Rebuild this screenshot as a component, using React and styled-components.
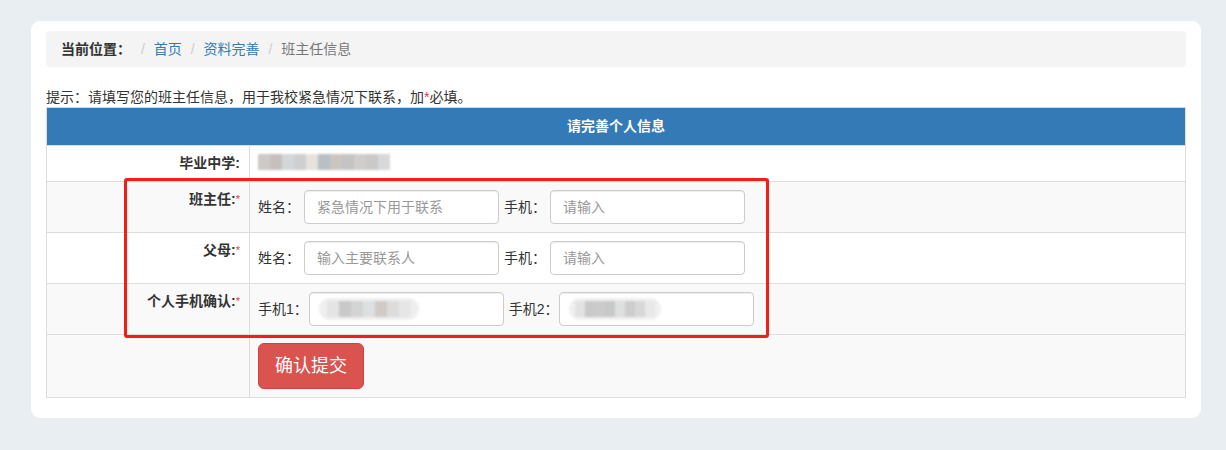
import React from 'react';
import styled, { createGlobalStyle } from 'styled-components';

const GlobalStyle = createGlobalStyle`
    html, body {
        margin: 0;
        padding: 0;
        background: #e8eef1;
    }
    body {
        font-family: 'Liberation Sans', 'Noto Sans CJK SC', sans-serif;
        color: #333;
        font-size: 14px;
    }
    * {
        box-sizing: border-box;
    }
`;

const Page = styled.div`
    padding: 21px 25px 33px 31px;
`;

const Card = styled.div`
    background: #fff;
    border-radius: 9px;
    padding: 10px 15px 20px 15px;
`;

const Breadcrumb = styled.ol`
    list-style: none;
    margin: 0 0 20px;
    padding: 8px 15px;
    height: 36px;
    background: #f4f4f4;
    border-radius: 4px;
    display: flex;
    align-items: center;
    line-height: 20px;
    font-size: 14px;

    & > li + li:before {
        content: '/\\00a0';
        padding: 0 5px;
        color: #ccc;
    }
`;

const Crumb = styled.li`
    color: ${(props) => (props.$active ? '#777' : '#337ab7')};
    font-weight: ${(props) => (props.$strong ? 'bold' : 'normal')};
    margin-right: 4px;
    ${(props) => props.$strong && 'color: #333; margin-right: 5px;'}
`;

const Hint = styled.p`
    margin: 0;
    font-size: 14px;
    line-height: 20px;
    color: #333;
`;

const Star = styled.span`
    color: #e4393c;
    font-size: ${(props) => (props.$small ? '11px' : 'inherit')};
    vertical-align: ${(props) => (props.$small ? 'top' : 'baseline')};
    font-weight: normal;
`;

const TableWrap = styled.div`
    position: relative;
`;

const Table = styled.table`
    width: 100%;
    border-collapse: collapse;
    border: 1px solid #ddd;
    font-size: 14px;
`;

const HeadCell = styled.th`
    background: #337ab7;
    color: #fff;
    font-size: 14px;
    font-weight: bold;
    text-align: center;
    padding: 9px 8px;
    line-height: 19px;
    border: 1px solid #ddd;
    border-top-color: #d6d6d6;
`;

const Row = styled.tr`
    background: ${(props) => (props.$striped ? '#f9f9f9' : '#fff')};
`;

const LabelCell = styled.td`
    width: 203px;
    text-align: right;
    vertical-align: top;
    font-weight: bold;
    padding: 8px 9px 8px 8px;
    line-height: 19px;
    border: 1px solid #ddd;
`;

const ValueCell = styled.td`
    padding: 8px;
    line-height: 19px;
    border: 1px solid #ddd;
    vertical-align: top;
`;

const FieldRow = styled.div`
    display: flex;
    align-items: center;
`;

const FieldLabel = styled.span`
    margin-right: ${(props) => (props.$gap !== undefined ? props.$gap : 4)}px;
    white-space: nowrap;
    color: #333;
`;

const inputLook = `
    width: 195px;
    height: 34px;
    padding: 6px 12px;
    border: 1px solid #ccc;
    border-radius: 4px;
    background: #fff;
    font-size: 14px;
    font-family: inherit;
    color: #555;
    box-shadow: inset 0 1px 1px rgba(0, 0, 0, 0.075);
    margin-right: 5px;
`;

const TextInput = styled.input`
    ${inputLook}
    outline: none;
    &::placeholder {
        color: #999;
    }
`;

const FilledInput = styled.div`
    ${inputLook}
    display: flex;
    align-items: center;
    padding-left: 9px;
`;

const Blurred = styled.div`
    display: flex;
    height: ${(props) => props.$h || 16}px;
    padding: 0 ${(props) => props.$pad || 0}px;
    border-radius: 12px;
    background: ${(props) => props.$bg || 'transparent'};
    filter: blur(0.8px);
    align-items: center;
`;

const Piece = styled.span`
    display: block;
    width: ${(props) => props.$w}px;
    height: 16px;
`;

const SubmitButton = styled.button`
    background: #d9534f;
    border: 1px solid #d43f3a;
    color: #fff;
    font-size: 18px;
    font-family: inherit;
    line-height: 24px;
    padding: 10px 16px;
    border-radius: 6px;
    height: 46px;
    width: 106px;
    cursor: pointer;
`;

const Annotation = styled.div`
    position: absolute;
    left: 78px;
    top: 71px;
    width: 645px;
    height: 160px;
    border: 3px solid #f21e17;
    border-radius: 3px;
    pointer-events: none;
`;

const blurSchool = ['#ccc9c7', '#c5c0bd', '#d3d7da', '#cfcfcf', '#e6e2dd', '#b9bfc5', '#cbc5c0', '#c4c4c4', '#d0cecc', '#cbc9c7', '#d6d8d9'];
const blurPhone1 = ['#e4e4e4', '#c9c9c9', '#d4d4d4', '#dde0e1', '#d1cbc8', '#dcdcdc', '#e6e6e6'];
const blurPhone2 = ['#e2e2e2', '#c9c9c9', '#cbcbcb', '#c8c8c8', '#dde0df', '#cdcdcd', '#d8d8d8', '#e8e8e8'];

const BlurText = ({ colors, w, bg, pad, h }) => (
    <Blurred $bg={bg} $pad={pad} $h={h}>
        {colors.map((c, i) => (
            <Piece key={i} $w={w} style={{ background: c }} />
        ))}
    </Blurred>
);

const App = () => {
    return (
        <Page>
            <GlobalStyle />
            <Card>
                <Breadcrumb>
                    <Crumb $strong>当前位置：</Crumb>
                    <Crumb>首页</Crumb>
                    <Crumb>资料完善</Crumb>
                    <Crumb $active>班主任信息</Crumb>
                </Breadcrumb>
                <Hint>
                    提示：请填写您的班主任信息，用于我校紧急情况下联系，加<Star>*</Star>必填。
                </Hint>
                <TableWrap>
                    <Table>
                        <thead>
                            <tr>
                                <HeadCell colSpan={2}>请完善个人信息</HeadCell>
                            </tr>
                        </thead>
                        <tbody>
                            <Row>
                                <LabelCell>毕业中学:</LabelCell>
                                <ValueCell>
                                    <BlurText colors={blurSchool} w={12} />
                                </ValueCell>
                            </Row>
                            <Row $striped>
                                <LabelCell>
                                    班主任:<Star $small>*</Star>
                                </LabelCell>
                                <ValueCell>
                                    <FieldRow>
                                        <FieldLabel>姓名：</FieldLabel>
                                        <TextInput placeholder="紧急情况下用于联系" />
                                        <FieldLabel>手机：</FieldLabel>
                                        <TextInput placeholder="请输入" />
                                    </FieldRow>
                                </ValueCell>
                            </Row>
                            <Row>
                                <LabelCell>
                                    父母:<Star $small>*</Star>
                                </LabelCell>
                                <ValueCell>
                                    <FieldRow>
                                        <FieldLabel>姓名：</FieldLabel>
                                        <TextInput placeholder="输入主要联系人" />
                                        <FieldLabel>手机：</FieldLabel>
                                        <TextInput placeholder="请输入" />
                                    </FieldRow>
                                </ValueCell>
                            </Row>
                            <Row $striped>
                                <LabelCell>
                                    个人手机确认:<Star $small>*</Star>
                                </LabelCell>
                                <ValueCell>
                                    <FieldRow>
                                        <FieldLabel $gap={1}>手机1：</FieldLabel>
                                        <FilledInput>
                                            <BlurText colors={blurPhone1} w={12} bg="#efefef" pad={8} h={22} />
                                        </FilledInput>
                                        <FieldLabel $gap={0}>手机2：</FieldLabel>
                                        <FilledInput>
                                            <BlurText colors={blurPhone2} w={10} bg="#f0f0f0" pad={6} h={22} />
                                        </FilledInput>
                                    </FieldRow>
                                </ValueCell>
                            </Row>
                            <Row $striped>
                                <LabelCell />
                                <ValueCell>
                                    <SubmitButton type="button">确认提交</SubmitButton>
                                </ValueCell>
                            </Row>
                        </tbody>
                    </Table>
                    <Annotation />
                </TableWrap>
            </Card>
        </Page>
    );
};

export default App;
